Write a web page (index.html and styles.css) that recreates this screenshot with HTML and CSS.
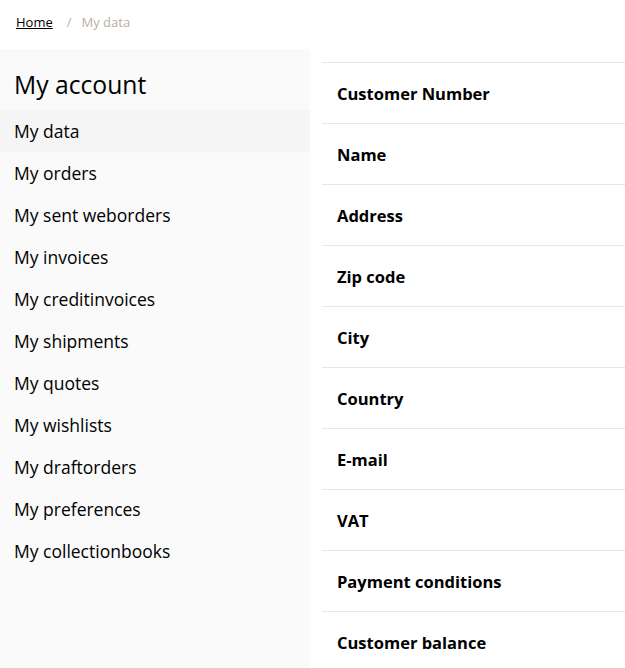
FILE: index.html
```html
<!DOCTYPE html>
<html>
<head>
<meta charset="utf-8">
<link rel="stylesheet" href="styles.css">
</head>
<body>
<nav class="breadcrumb">
  <a href="#" class="crumb-link">Home</a>
  <span class="crumb-sep">/</span>
  <span class="crumb-current">My data</span>
</nav>
<div class="layout">
  <aside class="sidebar">
    <h1 class="sidebar-title">My account</h1>
    <ul class="menu">
      <li class="menu-item active">My data</li>
      <li class="menu-item">My orders</li>
      <li class="menu-item">My sent weborders</li>
      <li class="menu-item">My invoices</li>
      <li class="menu-item">My creditinvoices</li>
      <li class="menu-item">My shipments</li>
      <li class="menu-item">My quotes</li>
      <li class="menu-item">My wishlists</li>
      <li class="menu-item">My draftorders</li>
      <li class="menu-item">My preferences</li>
      <li class="menu-item">My collectionbooks</li>
    </ul>
  </aside>
  <main class="content">
    <div class="row">Customer Number</div>
    <div class="row">Name</div>
    <div class="row">Address</div>
    <div class="row">Zip code</div>
    <div class="row">City</div>
    <div class="row">Country</div>
    <div class="row">E-mail</div>
    <div class="row">VAT</div>
    <div class="row">Payment conditions</div>
    <div class="row">Customer balance</div>
  </main>
</div>
</body>
</html>
```
FILE: styles.css
```css
html, body {
  margin: 0;
  padding: 0;
  background: #fff;
  color: #000;
  font-family: "Open Sans", "Noto Sans", "Liberation Sans", sans-serif;
  overflow: hidden;
}
.breadcrumb {
  padding: 12px 0 17px 16px;
  font-size: 13px;
  line-height: 20px;
  display: flex;
  align-items: center;
}
.crumb-link {
  color: #000;
  text-decoration: underline;
}
.crumb-sep {
  color: #b8b0a4;
  margin: 0 10px 0 14px;
}
.crumb-current {
  color: #b8b0a4;
}
.layout {
  display: flex;
  gap: 12px;
  min-height: 640px;
}
.sidebar {
  width: 310px;
  flex: none;
  background: #fafafa;
  padding-bottom: 40px;
}
.sidebar-title {
  margin: 0 0 9px 0;
  padding: 20px 14px 0;
  font-size: 24.7px;
  font-weight: 400;
  line-height: 32px;
}
.menu {
  list-style: none;
  margin: 0;
  padding: 0;
}
.menu-item {
  padding: 0 14px;
  height: 42px;
  line-height: 42px;
  font-size: 17.5px;
}
.menu-item.active {
  background: #f5f5f5;
}
.content {
  flex: 1;
  margin-top: 13px;
}
.row {
  border-top: 1px solid #e6e6e6;
  padding: 19px 15px 17px;
  line-height: 24px;
  font-size: 16.5px;
  font-weight: 700;
}
```
